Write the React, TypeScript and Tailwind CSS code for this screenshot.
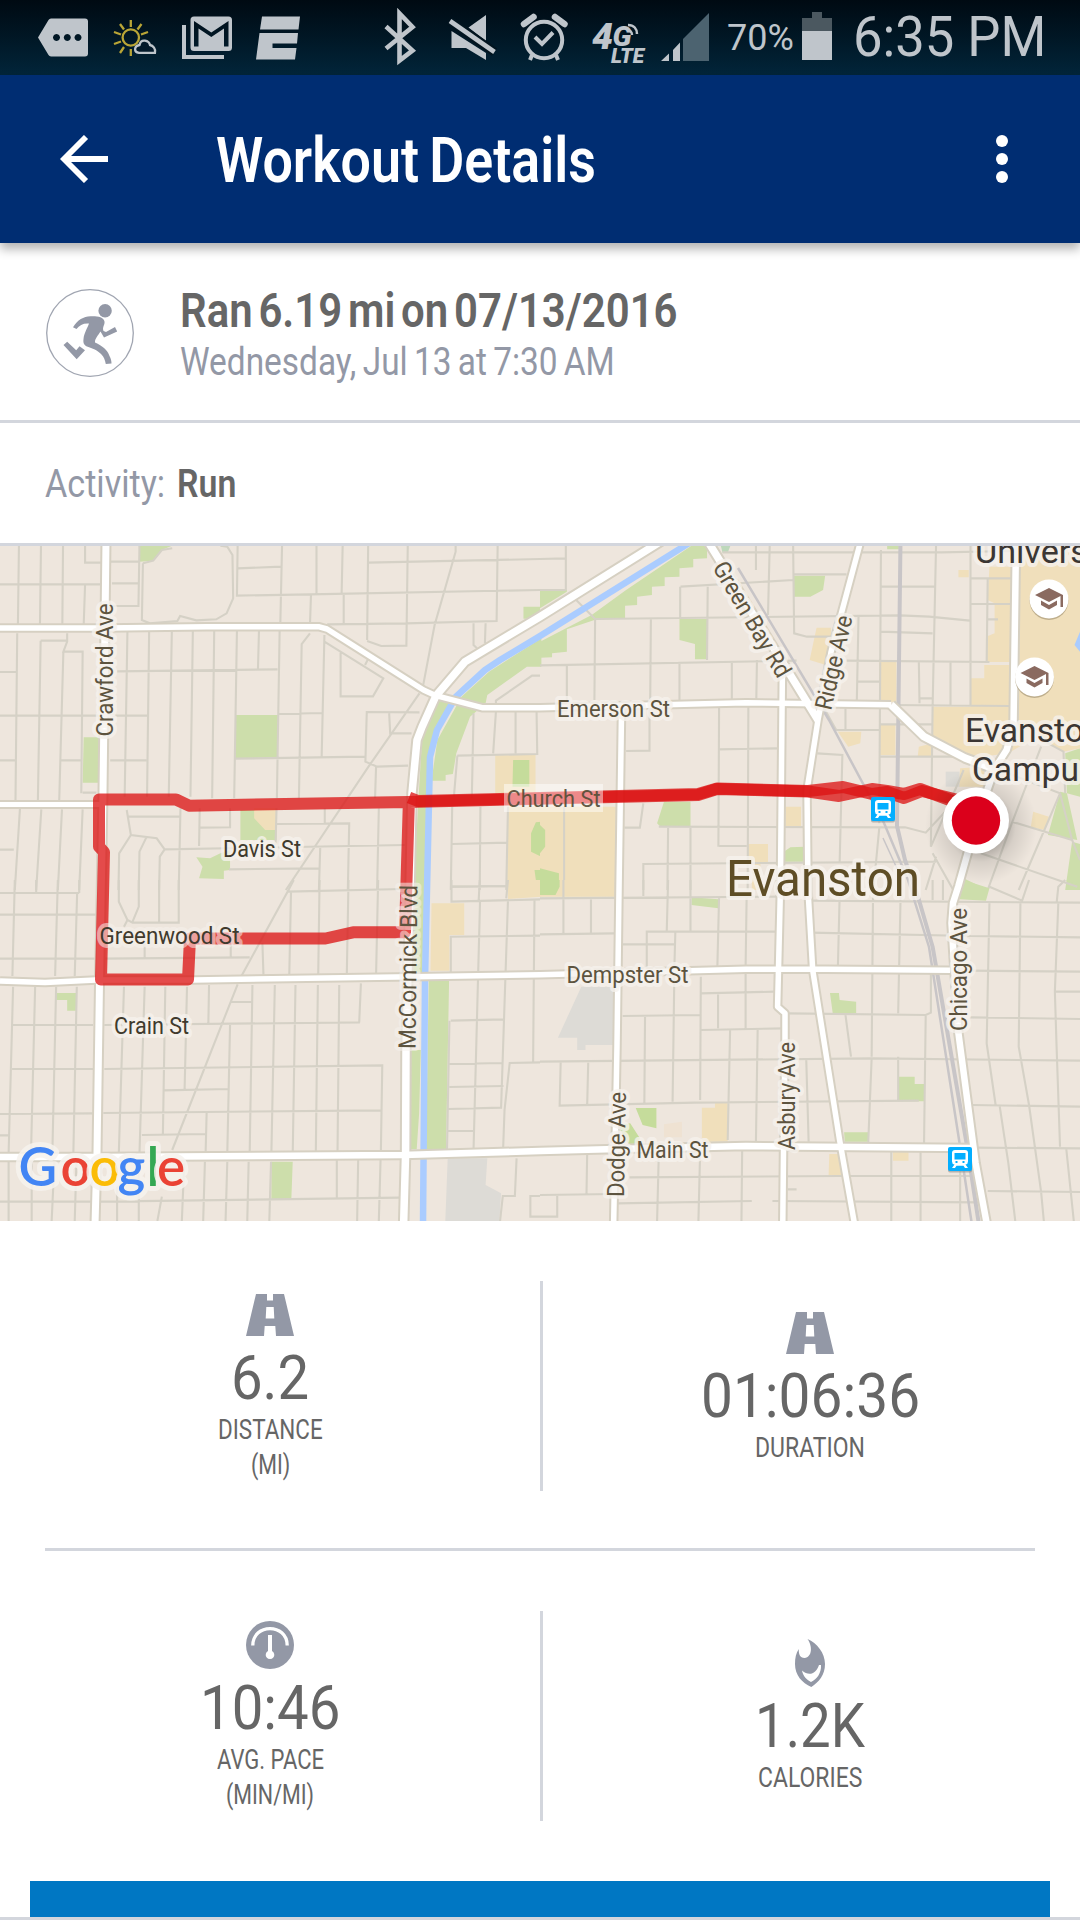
import { useLayoutEffect, useRef, type ReactNode } from "react";

/** Single line of text condensed horizontally to a fixed width. */
function Condensed({ width, className = "", children }: { width: number; className?: string; children: string }) {
  const box = useRef<HTMLSpanElement>(null);
  useLayoutEffect(() => {
    const el = box.current;
    if (el) el.style.transform = `scaleX(${width / el.offsetWidth})`;
  }, [width, children]);
  return (
    <span className={`flex whitespace-nowrap ${className}`} style={{ width }}>
      <span ref={box} className="inline-block origin-left shrink-0">
        {children}
      </span>
    </span>
  );
}

/** Status-bar glyph: a slice of the 75px tall bar starting at x. */
function BarIcon({ x, w, className = "", children }: { x: number; w: number; className?: string; children: ReactNode }) {
  return (
    <svg className={`h-[75px] shrink-0 ${className}`} width={w} viewBox={`${x} 0 ${w} 75`} fill="#bfc5cb">
      {children}
    </svg>
  );
}

function StatusBar() {
  return (
    <div className="flex h-[75px] items-center bg-linear-to-b from-[#000a12] to-[#02253a] pl-[38px] text-[#bfc5cb]">
      <BarIcon x={38} w={50}>
        <path fillRule="evenodd" d="M51 18.500H85a3 3 0 0 1 3 3V53.500a3 3 0 0 1-3 3H51a3 3 0 0 1-2.500-1.500L38 37.500L48.500 20a3 3 0 0 1 2.500-1.500ZM56.500 34a3.500 3.500 0 1 0 .01 0ZM67.300 34a3.500 3.500 0 1 0 .01 0ZM78 34a3.500 3.500 0 1 0 .01 0Z" />
      </BarIcon>
      <BarIcon x={112} w={46} className="ml-6">
        <g fill="none" stroke="#b9a536" strokeWidth="2.300">
          <circle cx="130.800" cy="37.500" r="8.200" />
          <path d="M130.800 20V27M130.800 49V56M114 32L121 34.500M114 44L121 41.500M120 24L124 29.500M141.500 24L137.500 29.500M148 32L141 34.500M120 53L124 47M139.500 50L137 46" />
        </g>
        <path d="M139 52.800H155C156 49 153 45.500 150 45C149 40.500 141 38 139.500 45C134 46 133.500 52 139 52.800Z" fill="#03192a" stroke="#bfc5cb" strokeWidth="2.300" />
      </BarIcon>
      <BarIcon x={181} w={52} className="ml-[23px]">
        <path d="M184 25V57H224" fill="none" stroke="#bfc5cb" strokeWidth="4" />
        <path fillRule="evenodd" d="M194 16.500H228.500a3.500 3.500 0 0 1 3.500 3.500V47.500a3.500 3.500 0 0 1-3.500 3.500H194a3.500 3.500 0 0 1-3.500-3.500V20a3.500 3.500 0 0 1 3.500-3.500ZM194 21V46.500H198.500V28.500L211.300 37L224 28.500V46.500H228.500V21L211.300 32.500Z" />
      </BarIcon>
      <BarIcon x={255} w={46} className="ml-[22px]">
        <path d="M262 16.500H300L298.500 29.500H260ZM259.500 33H298L297 43.500H272.500V48H296.500L295 59.500H256Z" />
      </BarIcon>
      <BarIcon x={383} w={36} className="ml-[82px]">
        <path d="M386 27L412.500 51L399.500 61V14L412.500 27.500L386 49" transform="translate(0 -.5)" fill="none" stroke="#bfc5cb" strokeWidth="4.600" />
      </BarIcon>
      <BarIcon x={448} w={50} className="ml-[29px]">
        <path d="M486 15V41L468.500 27.500ZM451.500 31L486 53V60L466 48H451.500Z" />
        <path d="M450 21L494.500 52" stroke="#02141f" strokeWidth="9" />
        <path d="M450 21L494.500 52" stroke="#bfc5cb" strokeWidth="4.600" />
      </BarIcon>
      <BarIcon x={520} w={48} className="ml-[22px]">
        <g fill="none" stroke="#bfc5cb">
          <circle cx="544" cy="40" r="18.200" strokeWidth="4" />
          <path d="M535 37L542 44L553 32.500" strokeWidth="4" />
          <path d="M524 24L533.500 17M555 17L564.500 24" strokeWidth="6.500" strokeLinecap="round" />
          <path d="M532 55L530 60M556 55L558 60" strokeWidth="4" />
        </g>
      </BarIcon>
      <BarIcon x={592} w={54} className="ml-6">
        <g fontFamily="Roboto, sans-serif" fontWeight="900" fontStyle="italic">
          <text x="592" y="48.500" fontSize="37" textLength="21" lengthAdjust="spacingAndGlyphs">4</text>
          <text x="612.500" y="46" fontSize="28" textLength="19" lengthAdjust="spacingAndGlyphs">G</text>
          <text x="611" y="63" fontSize="21" textLength="33" lengthAdjust="spacingAndGlyphs">LTE</text>
        </g>
        <path d="M628 25C634 25 637 29 637 34M627 30C630 30 632 32 632 35" fill="none" stroke="#bfc5cb" strokeWidth="2.500" />
      </BarIcon>
      <BarIcon x={660} w={50} className="ml-[14px]">
        <path d="M661 61L669 53.500V61ZM673 50L680 42.500V61H673Z" />
        <path d="M683 39L709 13V61H683Z" fill="#4c6370" />
      </BarIcon>
      <Condensed width={67} className="ml-[17px] font-['Roboto',sans-serif] text-[36px] leading-[80px]">70%</Condensed>
      <BarIcon x={801} w={32} className="ml-[7px]">
        <path d="M802 31H832V18H822V12H812V18H802Z" fill="#4b5860" />
        <path d="M802 31H832V60H802Z" />
      </BarIcon>
      <Condensed width={193} className="ml-5 font-['Roboto',sans-serif] text-[55px] leading-[79px]">6:35 PM</Condensed>
    </div>
  );
}

const streetsNW =
  "M55 17L52 255M119 17L116 255M183 17L181 255M247 17V68H308M247 135L243 255M0 133H295M322 65H403M325 130H403M405 17L402 198H320M415 70L412 240L435 250L515 243L523 228L570 241L628 238L658 220L677 175L675 45L660 20L640 17M415 70L445 62L470 30L500 25M690 17L688 167L900 163L1568 150M690 85L817 80M819 17L814 248M919 17V162M995 17L992 160M903 165L900 255M998 165V250M1069 17L1066 300M1069 68L1568 57M1184 17L1180 317L1107 318L1066 303M1445 17L1442 243L1180 250L950 253M1323 17V35L1262 255L1228 440M1375 250V315L1385 325M1410 250L1408 310M195 280V305L184 335H240L236 760M118 302H195M118 302L110 780M184 335L172 780M50 280L45 780M0 396H48M0 527H430M0 661H47M175 661H240M320 661H425M370 275L362 770M433 275L427 770M340 394L806 388M499 272L490 770M560 272L553 770M622 272L616 775M688 272L680 775M752 272L749 388M812 270L804 775M900 280L876 312L868 775M942 285L934 650M942 305L1113 415L1083 469H989V338M1070 355L1060 375M810 522L934 519M680 656L1060 650M1218 517L1065 516L1061 665L1095 680L1185 677M1130 520L1133 580H1195M1218 460L1070 680L830 1050M1092 680L1089 775M1375 520L1370 775M1440 515L1432 640M1497 515V640M1328 647L1560 642L1558 515M1328 647L1318 770M1440 490V482L1545 407H1568M58 805L43 1050M120 808L105 1050M180 808L168 1050M240 808L230 1050M240 758H280M0 929H40M368 810L380 885L455 895L478 928L1175 915M370 830H522M380 885L346 940L344 1050M425 892L405 935L403 1050M478 928L464 950L462 1050M524 805L519 1050M580 805L578 918M580 863L668 862V805M803 852L1014 850L1010 1050M803 805L800 915M943 805V850M665 988L928 985M930 918L926 1050M1100 805L1095 1050M1313 800L1309 1050M1395 800L1393 1050M1475 800L1470 1050M1313 912L1473 908M1313 1040L1470 1038";
const streetsNE =
  "M0 57L75 55M75 17V150M0 150H75M105 180L160 237L1045 226L1130 230L1248 242M160 237L158 480M322 237L320 480M407 140V235M408 140L735 120M0 376L745 362M487 140L485 360M78 376V480M405 365V480M557 365V480M630 360L628 480M735 17L738 280L775 290H850M627 17V90M667 17L662 225M530 37H1165L1370 33M735 103H890M990 30L985 850M925 225L920 480M990 140H1145M1150 17L1140 500L1135 920L1230 690M990 275L1140 280M890 362L1305 366M1100 366L1102 490M1100 475H1138M1192 366V495M1250 17V495M1250 115H1370M1250 192H1370M985 425H920M1020 495L1365 498M1300 115L1297 366M1300 238H1330M520 500L518 920M605 500L603 1050M690 625L520 628M318 500V632L250 633M825 505L860 570H985M887 505V570M805 640L878 645L870 970M985 553H1140M985 650H1228M245 863H290L300 790M372 860L370 1050M437 860V1050M345 860L1060 862L1120 878L1190 800M520 918H600M300 1050V972L1150 965M70 800V1050M985 865L968 1050M1280 940L1560 1040M1370 845L1545 900M1360 700L1510 760L1545 900L1568 960M1510 760L1390 1050M1455 620L1370 850L1300 1050M1440 590L1520 635L1525 760M1140 940L1200 1050M1150 950L1120 1050";
const streetsSW =
  "M0 39H230M0 104H280M0 236H275M43 0L36 288M105 0V39M168 0L160 288M230 0V39M224 39L217 288M345 0V65L370 120L385 128H519V0M403 0V80L385 125M462 0V128M300 236L725 232M370 120L360 140M420 190V232M670 190V232M853 0L835 35L700 290M835 35L1170 27M845 35L840 285M928 0L924 285M1012 0L1007 285M1098 0L1092 285M762 190L765 285M690 313L500 810M38 320L25 820M102 320L90 820M163 320L152 820M223 320L213 820M35 435H270M35 567H270M0 702L270 700M0 766H25M360 320L345 820M420 320L405 820M480 320L473 762M543 320L536 630M607 315L605 430M303 435L1045 427M1048 310L1043 427M303 567L1110 556L1106 810M300 699L1106 691M475 631L665 627M412 765L597 762M600 699L597 820M668 435L660 820M733 315L725 820M672 366H735M798 315L788 820M858 315L850 820M923 315L917 820M985 315L980 820M1311 0V65L1568 58M1393 0L1390 60M1475 0L1470 55M1311 20L1473 18M1309 285V170L1568 167M1394 60L1375 810M1475 60L1455 683L1302 687M1552 60L1548 545M1309 422L1465 418M1305 552L1460 549M1305 422L1298 810M1305 621L1462 618M1300 753H1375M1568 547L1480 549L1465 690L1461 805M0 965H270M290 965L1160 953M25 845V1023M92 845V1023M158 845L150 1023M222 845L217 1023M340 850V1023M403 850V1023M470 950L457 1023M535 850L528 1023M595 845L590 1023M660 845L655 1023M722 845L718 1023M787 845L782 1023M978 840V955M1040 840L1037 1023M1105 840L1100 1023M1500 835L1495 948H1460L1452 1023M1568 948H1540V1010H1568";
const streetsSE =
  "M68 0V160M0 163L215 160M148 55V158M0 55L700 50M300 0V48M372 0L368 155M437 0V155M310 270V155H695M393 155L390 270M240 193H393M520 50L515 260M600 50L597 260M870 50L865 260M967 50L963 530M1047 50L1040 400M785 158L1250 168M240 408L465 405M467 290L465 660M467 340L680 335M517 340V445M597 280V445M467 450L710 445M305 408L303 670M390 290L385 665M552 450L545 780M632 450L627 785M0 545L965 535L1568 542M60 548L57 677L450 668L1100 662M140 548L137 675M720 400L1120 405L1135 398V280M887 405L903 530M773 535L780 785M1120 405L1115 800M963 535L953 790M1040 530V662M1255 675L1568 680M1250 272L1568 275M1250 412L1568 417M1250 168L1568 172M1305 70L1297 490L1323 675M1395 70L1390 500L1420 675L1455 935L1463 1023M1505 70L1495 335L1500 500L1510 800M1568 335H1495M1335 680L1360 850L1380 1023M1265 803L1568 805M1300 933L1568 936M1528 805L1550 1023M785 62L1568 68M1305 20L1400 62L1420 0M1500 70L1505 20L1525 0M1140 0V60M1170 0V60M0 945L215 942M0 1010H50V945M137 820L135 942M260 892L870 888H1265M225 970L615 963M675 963L1275 967M345 820L340 1023M465 815L460 1023M587 810L585 1023M1020 810V1023M1105 810V1023M1220 870V1023M720 928H745";

const PARK = "#cddeab";
const SCHOOL = "#f0dfbb";
const LOT = "#dddbd6";

const majorRoads: [string, number][] = [
  ["M0 804.500H104", 5],
  ["M0 628L106 628L207 626.700H318.500L327 629L423.500 690L436 695.700L482 707.700H540L746 702.700L891 704.700", 5.500],
  ["M0 981L45 982.500L96 980H193L413 976.700L540 974.700L746 969.300H826L950 970.300", 5.500],
  ["M0 1157H96L403 1155L540 1151L616 1149L746 1146L972 1148", 6.500],
  ["M621.600 706L619 890L617 1046L613.700 1221", 5.500],
  ["M782.400 670L780.400 890L777.600 1006.700L785 1013.300V1046L783.500 1153L782.800 1221", 5.500],
  ["M861 540L831 652L818 720L807 790L808 890L812.700 970L839.600 1140L854.700 1225", 5.500],
  ["M707 540L791.400 676.700L818 720", 7.500],
  ["M891 704.700L924 736.700L965 758L994.500 769", 7.500],
  ["M1016 540L1013.500 726L1006.600 750L994.500 769L977 820L958.400 886L953 903L951.500 923L958.400 1033L975.600 1163L987 1225", 6.500],
  ["M106 540L103 793L99.500 983L97 1153L95 1225", 7],
  ["M663 540L540 616.700L465 661.700L436 695.700L422 727L417 740L412 793L410 890L406 1050L405.600 1153L403.600 1225", 7.500],
];

function Area({ d, fill = PARK }: { d: string; fill?: string }) {
  return <path d={d} fill={fill} />;
}

function Streets({ d }: { d: string }) {
  return <path d={d} fill="none" stroke="#d5d1c6" strokeWidth="2.100" vectorEffect="non-scaling-stroke" />;
}

function Label({ x, y, w, angle = 0, size = 24, fill = "#5d543f", children }: { x: number; y: number; w: number; angle?: number; size?: number; fill?: string; children: string }) {
  return (
    <text
      transform={`translate(${x} ${y}) rotate(${angle})`}
      fontSize={size}
      fill={fill}
      stroke="#f6f2ed"
      strokeOpacity=".8"
      strokeWidth="8"
      strokeLinejoin="round"
      paintOrder="stroke"
      textLength={w}
      lengthAdjust="spacingAndGlyphs"
    >
      {children}
    </text>
  );
}

function Station({ x, y }: { x: number; y: number }) {
  return (
    <g transform={`translate(${x} ${y})`}>
      <rect y="1.500" width="24" height="24" rx="2" fill="#8f8f8f" opacity=".6" />
      <rect width="24" height="24" rx="2" fill="#03aeff" />
      <path fillRule="evenodd" fill="#fff" d="M7 3H17a3 3 0 0 1 3 3V14.500a3 3 0 0 1-2.500 3L20 21H17L15.500 18.700H8.500L7 21H4L6.500 17.500A3 3 0 0 1 4 14.500V6a3 3 0 0 1 3-3ZM6.500 6V12.500H17.500V6ZM7.500 14V16H9.500V14ZM14.500 14V16H16.500V14Z" />
    </g>
  );
}

function College({ x, y }: { x: number; y: number }) {
  return (
    <g transform={`translate(${x} ${y})`}>
      <circle cy="1.500" r="19.500" fill="#a89878" opacity=".7" />
      <circle r="19.500" fill="#fff" />
      <path fill="#8a6a60" d="M-14 -4L0 -11L14 -4V8H11.500V-3L0 3ZM-8 1.500L0 6L8 1.500V6L0 10.500L-8 6Z" />
    </g>
  );
}

function RouteMap() {
  return (
    <svg className="block h-[675px] w-full" viewBox="0 546 1080 675" fontFamily="Roboto, sans-serif">
      <defs>
        <radialGradient id="halo">
          <stop offset=".3" stopColor="#000" stopOpacity=".34" />
          <stop offset=".62" stopColor="#000" stopOpacity=".1" />
          <stop offset="1" stopColor="#000" stopOpacity="0" />
        </radialGradient>
      </defs>
      <rect y="546" width="1080" height="675" fill="#eee6dd" />

      <g transform="translate(0 540) scale(.34439 .33333)">
        <Area d="M403 17H500L470 30L445 62L405 65ZM685 525H807V655H682ZM243 592H288V728H240ZM1520 200H1568V236H1520ZM570 952L610 955L640 940L668 930V990L650 992V1017L578 1015L588 980ZM698 810H803V900H698Z" />
        <Area d="M1572 295L1420 395L1340 470L1270 600L1253 722H1294V705L1315 702L1325 640L1365 530L1410 490L1415 465L1530 380H1572ZM1265 480L1305 490L1265 560L1245 700L1240 1050H1200L1225 600Z" />
        <Area fill={SCHOOL} d="M738 805H803V870H770L738 835ZM1438 645H1555V760H1438ZM1475 800H1572V1050H1472Z" />
        <Area fill="#c5dc9b" d="M1490 660H1537V740H1488ZM1572 845L1556 847L1542 880V935L1572 950ZM1552 990H1572V1050H1560Z" />
        <Streets d={streetsNW} />
      </g>
      <g transform="translate(540 540) scale(.34439 .33333)">
        <Area d="M440 17H485V55L445 57V82L405 85V110L362 112V138L325 140V165L282 170V195L247 197V235L158 240L78 268V335L35 340V352L0 353V305L150 225L250 150ZM0 150H78V155L0 205ZM735 107H828L822 150L785 170H737ZM405 237H487V358H450V312L405 300ZM360 785H437V860H350L340 850ZM708 935L727 922L768 920V965H708ZM1510 755L1530 760L1560 900L1475 885ZM1525 640L1568 625V770L1530 760ZM1545 905L1568 912V1050H1525ZM1230 1015L1300 1050H1225ZM1008 17H1042V28H1008Z" />
        <Area fill={SCHOOL} d="M1390 17H1568V625L1520 635L1440 590L1360 640L1250 655L1180 630L1140 590V500H1365L1385 400ZM1305 80H1370V366H1295V290L1320 280V190L1300 180ZM1250 415H1290V375H1370V500H1250ZM1215 90H1245V112H1215ZM985 362H1035V485H985ZM985 555H1032V645H985ZM803 263H845V300L830 375L783 360ZM865 575H933L930 610L895 620ZM712 800H758V858H712ZM603 912H662V970H640V1050H615V970H603ZM1432 815L1478 830L1465 870L1425 862ZM1100 620L1140 610V648H1097ZM0 800H230V1050H0ZM1220 685L1290 680V740H1215Z" />
        <Area fill="#bdd8bb" d="M525 17H553L545 38H530Z" />
        <Area fill="#c5dc9b" d="M0 855L15 870V920L0 940ZM0 985L55 1000V1050H0Z" />
        <Area fill="#aaccff" d="M1568 275L1552 315L1568 335Z" />
        <Area fill={LOT} d="M1178 695H1218V740H1178Z" />
        <Streets d={streetsNE} />
      </g>
      <g transform="translate(0 880) scale(.34439 .33333)">
        <Area d="M1200 0H1235L1225 300H1195ZM1245 303H1304L1295 808H1237ZM1193 510H1222L1217 700L1210 808H1190ZM163 339H223V392H195V360H163ZM788 845H850L846 957H788Z" />
        <Area fill={SCHOOL} d="M1253 70H1348V165H1305V272H1250ZM1475 0H1572V50L1475 57Z" />
        <Area fill={LOT} d="M1300 835H1415L1410 915L1455 940L1450 1023H1293Z" />
        <Streets d={streetsSW} />
      </g>
      <g transform="translate(540 880) scale(.34439 .33333)">
        <Area fill={SCHOOL} d="M0 0H220V50H0ZM470 683H508V668H545V785H470ZM840 822H875V885H838ZM1025 812H1070V842H1025Z" />
        <Area fill="#c5dc9b" d="M0 0H57V20L45 45H0ZM278 684H338V745L298 735ZM225 735L262 730L290 775L280 800L255 790Z" />
        <Area d="M440 52L518 58V85L440 75ZM842 339H868L870 360L918 365V400H850ZM1040 590H1088V612H1115V664H1040ZM883 757H953V785H885ZM1230 0L1305 25L1295 62L1218 58ZM1525 0H1568V15Z" />
        <Area fill={LOT} d="M120 320H215V495H132V510H108V473H52Z" />
        <Area fill="#efe2d2" d="M360 733L412 725V772H360Z" />
        <Streets d={streetsSE} />
      </g>

      <g fill="none" strokeLinejoin="round">
        <path d="M694 540L540 636L500 660L485 670L456 696.700L437 730L430 757L427 890L425 980L423 1225" stroke="#aaccff" strokeWidth="6.500" />
        <g stroke="#c8c5c7">
          <path d="M900.500 540L897 826L905 860L919 900L932.600 946.700L967 1146L979 1225" strokeWidth="4" />
          <path d="M738 568L829 720L884 823L908 880L929 947L960 1146L972 1225" strokeWidth="2.500" />
          <path d="M883 838L900 875" strokeWidth="1.500" />
        </g>
        {majorRoads.map(([d, w]) => (
          <path key={d} d={d} stroke="#d6d0c2" strokeWidth={w + 4} />
        ))}
        {majorRoads.map(([d, w]) => (
          <path key={d} d={d} stroke="#fff" strokeWidth={w} />
        ))}
        <g stroke="#dc1212" strokeOpacity=".76" strokeWidth="12">
          <path d="M958 803L920 789L904 794L887 791L872 789L839 796L808 791.500L717 789L698 795L409 802L189 805.700L176 799.500H99V846.700L104 852L101 979.500H188L190 938.500H325.500L353 932.300H405L409 797.500" />
          <path d="M409 797.500L418 801L540 798L698 794L717 788.500L808 791L843 787L872 794L887 792L904 798L922 791L958 800" />
        </g>
        <ellipse cx="981" cy="826" rx="56" ry="58" fill="url(#halo)" />
      </g>

      <Label x={113} y={736.500} w={133} angle={-90}>Crawford Ave</Label>
      <Label x={557} y={716.500} w={113}>Emerson St</Label>
      <g opacity=".95">
        <rect x="504" y="784" width="99" height="28" fill="#fff" opacity=".5" />
        <text x="506.500" y="806.500" fontSize="24" fill="#5d543f" textLength="94" lengthAdjust="spacingAndGlyphs">Church St</text>
      </g>
      <Label x={223} y={856.500} w={78} fill="#403a2d">Davis St</Label>
      <g fontSize="24">
        <text x="99.500" y="943.500" fill="#403a2d" stroke="#f6f2ed" strokeOpacity=".55" strokeWidth="8" strokeLinejoin="round" paintOrder="stroke" textLength="140" lengthAdjust="spacingAndGlyphs">Greenwood St</text>
        <text transform="translate(415.500 1049) rotate(-89.300)" fill="#5d543f" stroke="#f6f2ed" strokeOpacity=".55" strokeWidth="8" strokeLinejoin="round" paintOrder="stroke" textLength="164" lengthAdjust="spacingAndGlyphs">McCormick Blvd</text>
      </g>
      <Label x={114} y={1033.500} w={75} fill="#403a2d">Crain St</Label>
      <Label x={566.500} y={983} w={122}>Dempster St</Label>
      <Label x={636.500} y={1158} w={72}>Main St</Label>
      <Label x={624} y={1197} w={105} angle={-89}>Dodge Ave</Label>
      <Label x={794.500} y={1150} w={108} angle={-90}>Asbury Ave</Label>
      <Label x={966.500} y={1031} w={123} angle={-90}>Chicago Ave</Label>
      <Label x={712} y={567.500} w={130} angle={59.500}>Green Bay Rd</Label>
      <Label x={831} y={711} w={96} angle={-77}>Ridge Ave</Label>
      <Label x={726} y={896} w={194} size={50} fill="#5e4d25">Evanston</Label>
      <Label x={975} y={562.500} w={113} size={34} fill="#3b3633">Univers</Label>
      <Label x={965} y={742} w={119} size={34} fill="#3b3633">Evansto</Label>
      <Label x={972} y={781} w={107} size={34} fill="#3b3633">Campu</Label>

      <College x={1049} y={599} />
      <College x={1034.500} y={677} />
      <Station x={871} y={797} />
      <Station x={948} y={1147} />

      <circle cx="976" cy="820.500" r="33" fill="#fff" />
      <circle cx="976" cy="820.500" r="24.200" fill="#db001b" />

      <text y="1186" x="18.500 60.500 89.500 117.500 146.500 157" fontFamily="Lato, sans-serif" fontSize="53" fontWeight="600" stroke="#f6f2ed" strokeOpacity=".85" strokeWidth="10" strokeLinejoin="round" paintOrder="stroke">
        <tspan fill="#4285f4">G</tspan>
        <tspan fill="#ea4335">o</tspan>
        <tspan fill="#fbbc05">o</tspan>
        <tspan fill="#4285f4">g</tspan>
        <tspan fill="#34a853">l</tspan>
        <tspan fill="#ea4335">e</tspan>
      </text>
    </svg>
  );
}

function RunnerIcon() {
  return (
    <svg className="size-[88px]" viewBox="46.500 289 88 88" fill="#9398a6">
      <circle cx="90.500" cy="333" r="43.300" fill="none" stroke="#a0a5b1" strokeWidth="1.300" />
      <circle cx="105.600" cy="310.700" r="6.700" />
      <path d="M73.500 327.300C78 320 84 316.500 91 316.300C98 316 104 317 105 321.500C105.500 325 102.500 327 104 331L106.500 332L115.500 327L117.700 331.500L104.500 337.500L101 331.500C99 335 95 339 95.500 342.500C103 346 108 350 110 356C111.500 359 112 361 112 363.500L106.300 364C105.500 360 104.500 357 102 354.500C98 350 93 348.500 87.500 346.500C84.500 345 83.500 343 84 339C84.500 333 88 328 89.500 323.500C84 323 80 325 77 329Z" />
      <path d="M64 345L67.700 341.700L76.700 350.300L80 346.300L85.500 350.300L77.200 359.300Z" />
    </svg>
  );
}

function RoadIcon() {
  return (
    <svg className="size-12" viewBox="0 0 48 48" fill="#9398a6">
      <path fillRule="evenodd" d="M10 3H38L48 45H0ZM21 3V9.500H27V3ZM20.300 16L19.700 27.500H28.300L27.700 16ZM18.700 35L18 45H30L29.300 35Z" />
    </svg>
  );
}

function GaugeIcon() {
  return (
    <svg className="size-12" viewBox="0 0 48 48">
      <circle cx="24" cy="24" r="24" fill="#9398a6" />
      <path d="M6.800 24.500C6.800 2 41.200 2 41.200 24.500" fill="none" stroke="#fff" strokeWidth="3.300" />
      <path d="M22 14H26V30A4.300 4.300 0 1 1 22 30Z" fill="#fff" />
    </svg>
  );
}

function FlameIcon() {
  return (
    <svg className="size-12" viewBox="0 0 48 48" fill="#9398a6">
      <path fillRule="evenodd" d="M21.500 0C31 4 39 14 39 25C39 36 33 43 25.300 48C16 44 9 36 9 25C9 19 10 14 12.800 10C12.500 15 14 19 18.500 19C26.500 18 26.500 7 21.500 0ZM16 31.500C17 37 20.500 40.500 25 43C31 40 35.500 34 35 26H33C30 35 23 37.500 16 31.500Z" />
    </svg>
  );
}

function Stat({ icon, value, valueWidth, labels, className = "" }: { icon: ReactNode; value: string; valueWidth: number; labels: [string, number][]; className?: string }) {
  return (
    <div className={`flex flex-col items-center text-[#666] ${className}`}>
      {icon}
      <Condensed width={valueWidth} className="pt-[5px] text-[62px] leading-[68px]">{value}</Condensed>
      {labels.map(([label, width]) => (
        <Condensed key={label} width={width} className="text-[28px] leading-[35px]">{label}</Condensed>
      ))}
    </div>
  );
}

export default function App() {
  return (
    <div className="flex h-[1920px] w-[1080px] flex-col overflow-hidden bg-white font-['Roboto',sans-serif]">
      <StatusBar />
      <header className="relative z-10 flex h-[168px] items-center bg-[#002d72] shadow-[0_6px_10px_rgba(0,0,0,0.3)]">
        <svg className="ml-[60px] h-12 w-12" viewBox="0 0 48 48" fill="none" stroke="#fff" strokeWidth="5.800">
          <path d="M48 24H5M26 2L4 24L26 46" />
        </svg>
        <Condensed width={380} className="ml-[108px] pt-[3px] text-[63px] font-semibold leading-[165px] text-white [word-spacing:-0.06em]">Workout Details</Condensed>
        <svg className="mr-[72px] ml-auto h-12 w-3" viewBox="0 0 12 48" fill="#fff">
          <circle cx="6" cy="6" r="6" />
          <circle cx="6" cy="24" r="6" />
          <circle cx="6" cy="42" r="6" />
        </svg>
      </header>

      <section className="flex h-[180px] border-b-[3px] border-[#d3d6dd] pl-[46px]">
        <div className="pt-[46px]">
          <RunnerIcon />
        </div>
        <div className="ml-[46px] flex flex-col pt-[40px]">
          <Condensed width={498} className="text-[49px] font-semibold leading-[56px] text-[#666] [word-spacing:-0.11em]">Ran 6.19 mi on 07/13/2016</Condensed>
          <Condensed width={435} className="text-[39px] leading-[46px] text-[#9398a6] [word-spacing:-0.06em]">Wednesday, Jul 13 at 7:30 AM</Condensed>
        </div>
      </section>

      <section className="flex h-[123px] items-center border-b-[3px] border-[#d3d6dd] pt-0.5 pl-[45px] text-[39px] leading-[60px]">
        <Condensed width={120} className="text-[#9398a6]">Activity:</Condensed>
        <Condensed width={59} className="ml-3 font-semibold text-[#666]">Run</Condensed>
      </section>

      <RouteMap />

      <section className="mx-[45px] mt-[60px] flex h-[270px] border-b-[3px] border-[#d3d6dd]">
        <div className="flex h-[210px] w-full">
          <Stat className="w-[495px] pt-[10px] pr-[45px]" icon={<RoadIcon />} value="6.2" valueWidth={78} labels={[["DISTANCE", 105], ["(MI)", 39]]} />
          <div className="w-[3px] bg-[#d3d6dd]" />
          <Stat className="flex-1 pt-7 pl-[42px]" icon={<RoadIcon />} value="01:06:36" valueWidth={219} labels={[["DURATION", 110]]} />
        </div>
      </section>

      <section className="mx-[45px] mt-[60px] flex h-[270px]">
        <div className="flex h-[210px] w-full">
          <Stat className="w-[495px] pt-[10px] pr-[45px]" icon={<GaugeIcon />} value="10:46" valueWidth={140} labels={[["AVG. PACE", 107], ["(MIN/MI)", 88]]} />
          <div className="w-[3px] bg-[#d3d6dd]" />
          <Stat className="flex-1 pt-7 pl-[42px]" icon={<FlameIcon />} value="1.2K" valueWidth={110} labels={[["CALORIES", 104]]} />
        </div>
      </section>

      <div className="mx-[30px] h-9 shrink-0 bg-[#0077c3]" />
      <div className="h-[3px] shrink-0 bg-[#d3d6dd]" />
    </div>
  );
}
